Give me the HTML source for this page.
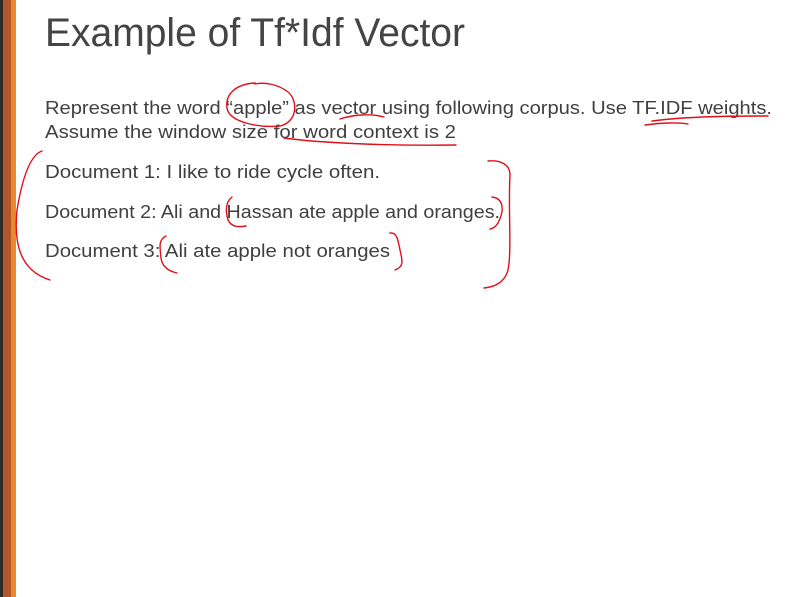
<!DOCTYPE html>
<html><head><style>
html,body{margin:0;padding:0;background:#fff;width:801px;height:597px;overflow:hidden}
svg{display:block}
text{font-family:"Liberation Sans",sans-serif;fill:#404040}
</style></head><body>
<svg width="801" height="597" viewBox="0 0 801 597">
<rect x="0" y="0" width="3" height="597" fill="#2b2b2b"/>
<rect x="3" y="0" width="8" height="597" fill="#b5532a"/>
<rect x="11" y="0" width="5" height="597" fill="#e8892a"/>
<text x="45" y="46" font-size="40" textLength="420" lengthAdjust="spacingAndGlyphs" style="fill:#444">Example of Tf*Idf Vector</text>
<g font-size="18">
<text x="45" y="114" textLength="727" lengthAdjust="spacingAndGlyphs">Represent the word “apple” as vector using following corpus. Use TF.IDF weights.</text>
<text x="45" y="138" textLength="411" lengthAdjust="spacingAndGlyphs">Assume the window size for word context is 2</text>
<text x="45" y="178" textLength="335" lengthAdjust="spacingAndGlyphs">Document 1: I like to ride cycle often.</text>
<text x="45" y="218" textLength="455" lengthAdjust="spacingAndGlyphs">Document 2: Ali and Hassan ate apple and oranges.</text>
<text x="45" y="257" textLength="345" lengthAdjust="spacingAndGlyphs">Document 3: Ali ate apple not oranges</text>
</g>
<g fill="none" stroke="#e0101a" stroke-width="1.4" stroke-linecap="round">
<path d="M255 83 C236 84 225 94 227 108 C229 122 258 128 280 126 C298 122 298 100 288 92 C278 84 264 82 255 84"/>
<path d="M340 119 C352 115 370 113 384 117"/>
<path d="M284 138 C320 143 390 146 456 145"/>
<path d="M645 125 C660 123 678 122 688 124"/>
<path d="M652 121 C690 116 740 116 768 116"/>
<path d="M42 151 C30 155 22 180 17 210 C14 240 18 270 50 280"/>
<path d="M488 161 C500 160 510 164 510 175 C508 210 512 250 508 270 C505 282 495 287 484 288"/>
<path d="M232 197 C226 202 225 210 228 220 C232 228 240 227 246 226"/>
<path d="M492 197 C500 198 503 203 502 212 C500 220 497 228 490 229"/>
<path d="M166 236 C158 240 160 248 161 258 C162 266 168 271 177 273"/>
<path d="M390 233 C397 232 398 240 400 250 C402 260 405 266 395 270"/>
</g>
</svg>
</body></html>
